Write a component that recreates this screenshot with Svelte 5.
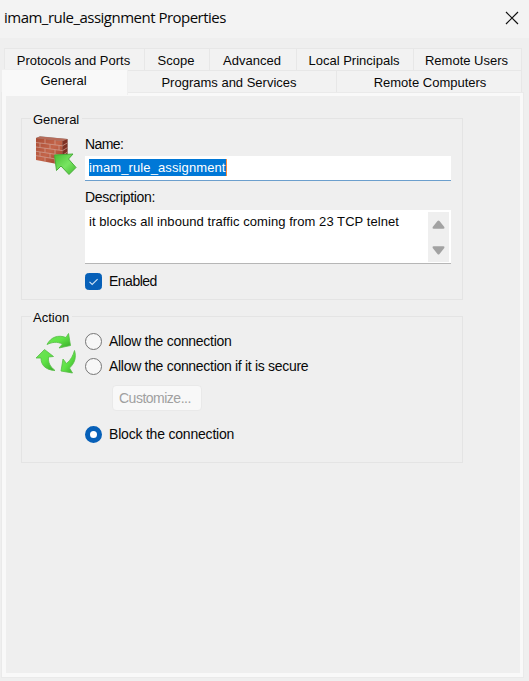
<script>
  const upperTabs = [
    { label: 'Protocols and Ports', width: 140 },
    { label: 'Scope', width: 65 },
    { label: 'Advanced', width: 87 },
    { label: 'Local Principals', width: 117 },
    { label: 'Remote Users', width: 108 }
  ];
  let name = $state('imam_rule_assignment');
  let description = $state('it blocks all inbound traffic coming from 23 TCP telnet');
  let enabled = $state(true);
  let action = $state('block');
</script>

<main class="dialog">
  <header>
    <h1>imam_rule_assignment Properties</h1>
    <button class="close" aria-label="Close">
      <svg width="14" height="14" viewBox="0 0 14 14"><path d="M1 1 13 13M13 1 1 13" stroke="#111" stroke-width="1.2" fill="none" /></svg>
    </button>
  </header>

  <nav class="upper">
    {#each upperTabs as tab}
      <button class="tab" style:width="{tab.width}px">{tab.label}</button>
    {/each}
  </nav>
  <nav class="lower">
    <button class="tab active">General</button>
    <button class="tab programs">Programs and Services</button>
    <button class="tab computers">Remote Computers</button>
  </nav>

  <section class="panel">
    <section class="group general">
      <h2>General</h2>
      <div class="columns">
        <svg class="wall" width="44" height="42" viewBox="0 0 44 42">
          <defs>
            <linearGradient id="brick" x1="0" y1="0" x2="1" y2="1"><stop offset="0" stop-color="#a94c35" /><stop offset=".5" stop-color="#c4654a" /><stop offset="1" stop-color="#963a27" /></linearGradient>
            <linearGradient id="leaf" x1="0" y1="0" x2="1" y2="1"><stop offset="0" stop-color="#45bd32" /><stop offset=".55" stop-color="#78e561" /><stop offset="1" stop-color="#43b932" /></linearGradient>
          </defs>
          <path d="M1 3 5 1.200 32.500 4v19l-3 4z" fill="#8f8782" />
          <path d="M1 3 27.500 6V30L1 25z" fill="url(#brick)" />
          <path d="M27.500 6 32.500 4V24L27.500 30z" fill="#7e3023" />
          <path d="M1 3 5 1.500 32.500 4 27.500 6z" fill="#b76b59" />
          <path d="M1 7.500 27.500 10.800M1 12 27.500 15.600M1 16.300 27.500 20.400M1 20.600 27.500 25.200M10 4v4.500M20 5.200v4.600M5 8v4.400M15 9.300v4.600M24 10.400v4.700M10 13.200v4.400M20 14.600v4.700M5 17v4.300M15 18.500v4.500M24 19.900v4.700M10 22.200v4.600M20 24v4.700M27.500 10.800l5-3M27.500 15.600l5-3M27.500 20.400l5-3.400" stroke="#cf9c8e" stroke-width=".8" fill="none" />
          <path d="M19.500 20 38 19 33.500 24 41 32.500 34 39.500 26 31 21.500 35.500z" fill="url(#leaf)" stroke="#49ad3a" stroke-width="1" stroke-linejoin="round" />
        </svg>
        <div class="fields">
          <div class="caption name-label">Name:</div>
          <div class="name-box"><span class="selected">{name}</span></div>
          <div class="caption desc-label">Description:</div>
          <div class="desc-box">
            <span class="desc">{description}</span>
            <div class="scroll">
              <svg width="13" height="9" viewBox="0 0 13 9"><path d="M5.5 1Q6.5 0 7.5 1L12.3 7Q13 8.5 11.5 8.7H1.5Q0 8.5.7 7z" fill="#a2a2a2" /></svg>
              <svg width="13" height="9" viewBox="0 0 13 9"><path d="M5.5 8Q6.5 9 7.5 8L12.3 2Q13 .5 11.5.3H1.5Q0 .5.7 2z" fill="#a2a2a2" /></svg>
            </div>
          </div>
          <button class="option enabled" role="checkbox" aria-checked={enabled} onclick={() => (enabled = !enabled)}>
            <svg width="17" height="17" viewBox="0 0 17 17">
              <rect x=".5" y=".5" width="16" height="16" rx="3" fill={enabled ? '#0760b8' : '#f7f7f7'} stroke={enabled ? '#0760b8' : '#858585'} />
              {#if enabled}<path d="m4.5 8.8 2.7 2.7 5.4-5.4" fill="none" stroke="#cfe3f5" stroke-width="1.1" />{/if}
            </svg>
            <span class="w-enabled">Enabled</span>
          </button>
        </div>
      </div>
    </section>

    <section class="group action">
      <h2>Action</h2>
      <div class="columns">
        <svg class="cycle" width="44" height="44" viewBox="0 0 44 44">
          <defs>
            <linearGradient id="arc" x1="0" y1="0" x2="1" y2="1"><stop offset="0" stop-color="#73df5d" /><stop offset=".5" stop-color="#60e447" /><stop offset="1" stop-color="#36a927" /></linearGradient>
          </defs>
          <g fill="url(#arc)" stroke="#55bc45" stroke-width=".8" stroke-linejoin="round">
            <path d="M12 12.500C16 5 23 2.500 31 5.500L33.500 1.500 35.500 13.500 24 16 27.500 12C22 9.500 17.500 10 12 12.500Z" />
            <path d="M39.500 18.500C41.500 25 40 31 34.500 36L37.500 41 26 39 28 27 31.500 31.500C36 28 38 23.500 39.500 18.500Z" />
            <path d="M20 38.500C11 38 6 33.500 6 26L1 26 9.500 17.500 18.500 24.500 13.500 25C13 30.500 15 34.500 20 38.500Z" />
          </g>
        </svg>
        <div class="fields choices">
          <button class="option" role="radio" aria-checked={action === 'allow'} onclick={() => (action = 'allow')}>
            <i class:on={action === 'allow'}></i><span>Allow the connection</span>
          </button>
          <button class="option second" role="radio" aria-checked={action === 'secure'} onclick={() => (action = 'secure')}>
            <i class:on={action === 'secure'}></i><span>Allow the connection if it is secure</span>
          </button>
          <button class="customize" disabled>Customize...</button>
          <button class="option block" role="radio" aria-checked={action === 'block'} onclick={() => (action = 'block')}>
            <i class:on={action === 'block'}></i><span>Block the connection</span>
          </button>
        </div>
      </div>
    </section>
  </section>
</main>

<style>
  :global(body) { margin: 0; background: #efefef; }
  * { box-sizing: border-box; }
  button { font: inherit; color: inherit; border: 0; padding: 0; margin: 0; background: none; white-space: nowrap; letter-spacing: inherit; }
  svg { display: block; flex: none; }
  .dialog { width: 529px; height: 681px; background: #efefef; color: #080808; font: 13px/16px "Liberation Sans", Arial, sans-serif; display: flex; flex-direction: column; overflow: hidden; }
  header { height: 38px; flex: none; background: #f3f3f3; display: flex; justify-content: space-between; padding: 8px 10px 0 4px; }
  h1 { margin: -1px 0 0; font: 15px/20px "Open Sans", "Noto Sans", sans-serif; letter-spacing: -.51px; white-space: nowrap; }
  .close { height: 14px; margin-top: 3px; }
  nav { display: flex; flex: none; }
  .upper { margin: 10px 0 0 4px; height: 22px; width: 518px; border-left: 1px solid #e8e8e8; }
  .tab { height: 23px; background: #f2f2f2; border: solid #e7e7e7; border-width: 1px 1px 0 0; line-height: 22px; text-align: center; padding: 1px 2px 0 0; }
  .lower { margin-left: 2px; height: 23px; align-items: flex-end; }
  .lower .tab { height: 23px; padding-top: 2px; line-height: 20px; }
  .lower .active { width: 126px; height: 26px; margin-bottom: -2px; background: #f9f9f9; border-color: #f0f0f0; position: relative; padding: 0 2px 4px 0; }
  .lower .programs { width: 209px; padding-right: 6px; }
  .lower .computers { width: 185px; padding-left: 4px; }
  .panel { margin-left: 2px; width: 521px; height: 584px; flex: none; border: solid #f9f9f9; border-width: 3px 3px 4px 4px; box-shadow: 0 0 0 1px #eaeaea; padding: 22px 0 0 15px; }
  .group { width: 442px; border: 1px solid #e4e4e4; }
  .general { height: 182px; }
  .action { height: 147px; margin-top: 16px; }
  h2 { margin: -7px 0 0 9px; width: max-content; padding: 0 3px 0 2px; background: #efefef; font: inherit; line-height: 16px; }
  .columns { display: flex; }
  .wall { margin: 7px 0 0 13px; }
  .fields { margin-left: 6px; width: 366px; display: flex; flex-direction: column; align-items: flex-start; font-size: 14px; line-height: 18px; letter-spacing: -.3px; }
  .caption { height: 18px; }
  .name-label { margin-top: 7px; letter-spacing: -.6px; }
  .name-box { width: 366px; height: 25px; margin-top: 3px; background: #fff; border-bottom: 1px solid #6c9fcd; padding: 3px 0 0 4px; font-size: 13px; line-height: 17px; letter-spacing: .11px; }
  .selected { display: block; width: max-content; background: #0078d7; color: #fff; border-right: 1px solid #ff8b36; }
  .desc-label { margin-top: 7px; letter-spacing: -.33px; }
  .desc-box { width: 366px; height: 54px; margin-top: 4px; background: #fff; border-bottom: 1px solid #b6b6b6; display: flex; justify-content: space-between; padding: 2px 2px 1px 4px; font-size: 13px; letter-spacing: .065px; }
  .desc { line-height: 20px; white-space: nowrap; }
  .scroll { width: 21px; background: #efefef; display: flex; flex-direction: column; align-items: center; justify-content: space-between; padding: 8px 0 7px; }
  .option { display: flex; align-items: center; gap: 7px; height: 18px; }
  .enabled { margin-top: 8px; letter-spacing: -.5px; }
  .cycle { margin: 6px 0 0 13px; }
  i { width: 17px; height: 17px; flex: none; border: 1px solid #767676; border-radius: 50%; background: #f7f7f7; }
  i.on { border: 5px solid #0760b8; background: #fff; }
  .choices { padding-top: 6px; }
  .second { margin-top: 7px; }
  .customize { width: 90px; height: 26px; margin: 10px 0 14px 27px; border: 1px solid #e9e9e9; border-radius: 4px; background: #f8f8f8; color: #a0a0a0; text-align: left; padding-left: 6px; letter-spacing: -.5px; }
  .block { letter-spacing: -.2px; }
</style>
